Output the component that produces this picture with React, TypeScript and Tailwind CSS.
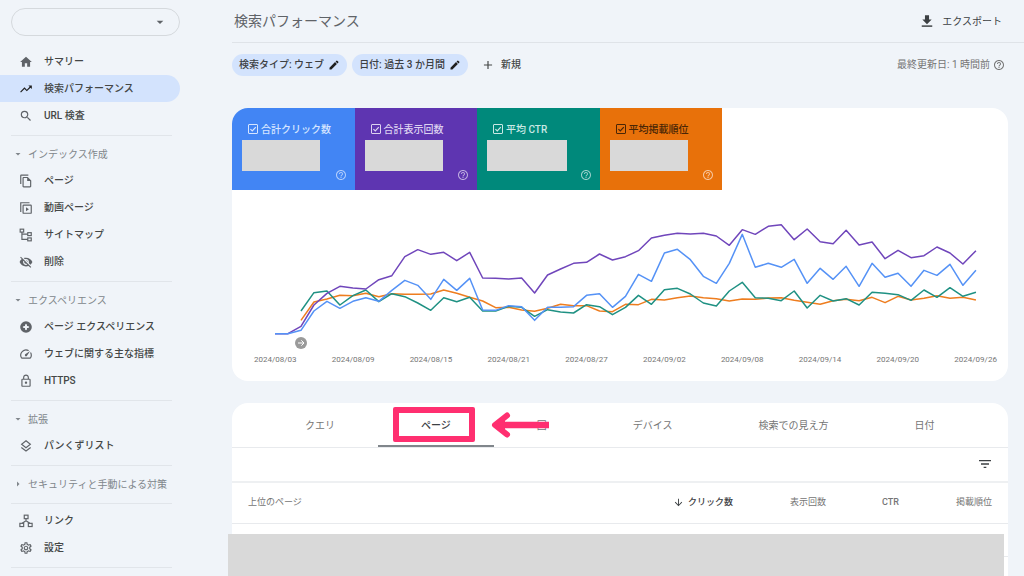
import { useState } from "react";
import type { ReactNode } from "react";
import {
  MdAdd,
  MdArrowDownward,
  MdArrowDropDown,
  MdArrowRight,
  MdEdit,
  MdFilterList,
  MdHelpOutline,
  MdHome,
  MdOutlineFileCopy,
  MdOutlineLock,
  MdOutlineSettings,
  MdOutlineSpeed,
  MdSearch,
  MdTrendingUp,
  MdVisibilityOff,
} from "react-icons/md";

const VideoPagesIcon = () => (
  <svg viewBox="0 0 24 24" className="size-[14px]" fill="none" stroke="currentColor" strokeWidth="2">
    <path d="M3 19V3h15" />
    <rect x="7" y="7" width="14" height="14" rx="1" />
    <path d="M12 10.500v7l5-3.500z" fill="currentColor" stroke="none" />
  </svg>
);

const SitemapIcon = () => (
  <svg viewBox="0 0 24 24" className="size-[14px]" fill="none" stroke="currentColor" strokeWidth="2">
    <rect x="2" y="2" width="6" height="5" />
    <rect x="15" y="8" width="6" height="5" />
    <rect x="15" y="17" width="6" height="5" />
    <path d="M5 7v12.500h10M5 10.500h10" />
  </svg>
);

const ExperienceIcon = () => (
  <svg viewBox="0 0 24 24" className="size-[14px]" fill="currentColor">
    <circle cx="12" cy="12" r="10" />
    <path d="M12 6l1.800 4.200L18 12l-4.200 1.800L12 18l-1.800-4.200L6 12l4.200-1.800z" fill="#f0f4f9" />
    <path d="M10.500 7.500h3v3h3v3h-3v3h-3v-3h-3v-3h3z" fill="#f0f4f9" />
  </svg>
);

const BreadcrumbIcon = () => (
  <svg viewBox="0 0 24 24" className="size-[14px]" fill="none" stroke="currentColor" strokeWidth="2">
    <path d="M12 3l7.500 6-7.500 6-7.500-6z" />
    <path d="M4 14.500l8 6.200 8-6.200" />
  </svg>
);

const LinksIcon = () => (
  <svg viewBox="0 0 24 24" className="size-[14px]" fill="none" stroke="currentColor" strokeWidth="2">
    <rect x="9" y="2" width="6.500" height="6" />
    <rect x="1.500" y="16" width="6.500" height="5.500" />
    <rect x="16" y="16" width="6.500" height="5.500" />
    <path d="M12 8v4M5.500 16l6.500-4.500 6.500 4.500" />
  </svg>
);

const DownloadIcon = () => (
  <svg viewBox="0 0 24 24" className="size-[14px]" fill="currentColor">
    <path d="M20 9.500h-4.500V2h-7v7.500H4l8 8z" />
    <path d="M3 19.500h18V22H3z" />
  </svg>
);

type NavItemProps = { icon: ReactNode; label: string; active?: boolean };

const NavItem = ({ icon, label, active }: NavItemProps) => (
  <a
    href="#"
    className={
      active
        ? "flex h-[27px] items-center gap-[11px] rounded-r-full bg-[#d3e3fd] pl-[19px] text-[#1f1f1f]"
        : "flex h-[27px] items-center gap-[11px] pl-[19px] text-[#5f6368]"
    }
  >
    {icon}
    <span className="text-[10px] font-medium text-[#444746]">{label}</span>
  </a>
);

const Divider = () => <hr className="mt-[6px] ml-[11px] mr-2 border-[#e1e5ea]" />;

const NavSection = ({ label, closed }: { label: string; closed?: boolean }) => (
  <button
    type="button"
    className="mt-[5px] flex h-[26px] w-full items-center gap-1 pl-3 text-[10px] text-[#80868b]"
  >
    {closed ? <MdArrowRight className="size-3" /> : <MdArrowDropDown className="size-3" />}
    {label}
  </button>
);

const Sidebar = () => (
  <aside className="w-[180px] shrink-0 overflow-hidden pt-2">
    <div className="relative ml-[11px]">
      <select
        aria-label="プロパティ"
        className="h-7 w-full appearance-none rounded-full border border-[#d5d9dd] bg-transparent px-4"
      />
      <MdArrowDropDown className="pointer-events-none absolute top-[6px] right-3 size-4 text-[#5f6368]" />
    </div>
    <nav className="mt-3">
      <NavItem icon={<MdHome className="size-[14px]" />} label="サマリー" />
      <NavItem icon={<MdTrendingUp className="size-[14px]" />} label="検索パフォーマンス" active />
      <NavItem icon={<MdSearch className="size-[14px]" />} label="URL 検査" />
      <Divider />
      <NavSection label="インデックス作成" />
      <NavItem icon={<MdOutlineFileCopy className="size-[14px]" />} label="ページ" />
      <NavItem icon={<VideoPagesIcon />} label="動画ページ" />
      <NavItem icon={<SitemapIcon />} label="サイトマップ" />
      <NavItem icon={<MdVisibilityOff className="size-[14px]" />} label="削除" />
      <Divider />
      <NavSection label="エクスペリエンス" />
      <NavItem icon={<ExperienceIcon />} label="ページ エクスペリエンス" />
      <NavItem icon={<MdOutlineSpeed className="size-[14px]" />} label="ウェブに関する主な指標" />
      <NavItem icon={<MdOutlineLock className="size-[14px]" />} label="HTTPS" />
      <Divider />
      <NavSection label="拡張" />
      <NavItem icon={<BreadcrumbIcon />} label="パンくずリスト" />
      <Divider />
      <NavSection label="セキュリティと手動による対策" closed />
      <Divider />
      <div className="pt-[3px]">
        <NavItem icon={<LinksIcon />} label="リンク" />
        <NavItem icon={<MdOutlineSettings className="size-[14px]" />} label="設定" />
      </div>
      <Divider />
    </nav>
  </aside>
);

const metrics = [
  { id: "clicks", label: "合計クリック数", card: "bg-[#4285f4] text-[#d6e5ff]", box: "w-[78px]" },
  { id: "impressions", label: "合計表示回数", card: "bg-[#5e35b1] text-[#dcd1f0]", box: "w-[78px]" },
  { id: "ctr", label: "平均 CTR", card: "bg-[#00897b] text-[#c9e8e4]", box: "w-[80px]" },
  { id: "position", label: "平均掲載順位", card: "bg-[#e8710a] text-[#4a2606]", box: "w-[78px]" },
];

const MetricCards = () => (
  <div className="grid w-[490px] grid-cols-4">
    {metrics.map((m) => (
      <div key={m.id} className={`h-[82px] pt-[13px] pr-2 pl-[10px] ${m.card}`}>
        <label htmlFor={m.id} className="flex h-4 items-center gap-[3px] pl-[6px] text-[10px] font-medium">
          <span className="relative size-[10px]">
            <input
              id={m.id}
              type="checkbox"
              defaultChecked
              className="peer block size-[10px] appearance-none rounded-[1px] border border-current"
            />
            <svg
              viewBox="0 0 10 10"
              className="pointer-events-none invisible absolute inset-0 peer-checked:visible"
              fill="none"
              stroke="currentColor"
              strokeWidth="1.200"
            >
              <path d="M2.400 5.100l1.900 1.900 3.500-3.800" />
            </svg>
          </span>
          {m.label}
        </label>
        <div className="mt-[3px] flex h-[41px] justify-between">
          <div className={`h-[31px] bg-[#d9d9d9] ${m.box}`} />
          <button type="button" aria-label="ヘルプ" className="self-end text-white/60">
            <MdHelpOutline className="size-3" />
          </button>
        </div>
      </div>
    ))}
  </div>
);

// distance from the top of the plot, one value per day
const impressions = [
  371, 371, 349, 285, 250, 229, 234, 237, 209, 197, 140, 119, 133, 127, 152, 127, 204, 205, 207, 204, 249, 195, 177,
  160, 157, 132, 150, 140, 122, 84, 76, 70, 72, 70, 78, 106, 59, 73, 49, 44, 89, 57, 95, 101, 61, 105, 96, 146, 121,
  143, 137, 111, 129, 162, 122,
];
const clicks = [
  371, 371, 361, 303, 274, 295, 274, 263, 274, 241, 211, 226, 268, 208, 241, 205, 300, 301, 287, 290, 331, 292, 292,
  290, 256, 251, 292, 259, 193, 214, 129, 118, 149, 199, 220, 160, 73, 172, 160, 172, 148, 220, 175, 208, 169, 229,
  160, 202, 190, 229, 181, 196, 163, 226, 181,
];
const ctr = [
  303, 248, 243, 285, 257, 240, 275, 251, 260, 279, 301, 263, 275, 262, 303, 303, 289, 292, 319, 299, 306, 309, 284,
  290, 314, 292, 256, 283, 239, 235, 252, 279, 288, 243, 217, 263, 265, 272, 243, 294, 256, 273, 266, 285, 247, 250,
  254, 271, 240, 262, 233, 259, 247,
];
const position = [
  331, 276, 267, 256, 257, 250, 260, 251, 253, 253, 252, 240, 250, 262, 273, 293, 292, 300, 304, 295, 283, 287, 287,
  303, 305, 283, 284, 268, 270, 263, 258, 263, 266, 273, 267, 268, 264, 263, 271, 277, 283, 272, 268, 272, 262, 278,
  259, 270, 265, 257, 265, 262, 270,
];

const toPoints = (values: number[], start = 0) =>
  values.map((v, i) => `${(129 + (i + start) * 38.94).toFixed(1)},${v}`).join(" ");

const dates = [
  "2024/08/03",
  "2024/08/09",
  "2024/08/15",
  "2024/08/21",
  "2024/08/27",
  "2024/09/02",
  "2024/09/08",
  "2024/09/14",
  "2024/09/20",
  "2024/09/26",
];

const Chart = () => (
  <div className="pt-5 pb-[13px]">
    <svg viewBox="0 0 2328 426" className="block w-full" fill="none" strokeWidth="4.500" strokeLinejoin="round">
      <polyline points={toPoints(position, 2)} stroke="#ee7d1f" />
      <polyline points={toPoints(ctr, 2)} stroke="#1f9183" />
      <polyline points={toPoints(impressions)} stroke="#7046bb" />
      <polyline points={toPoints(clicks)} stroke="#5592f6" />
      <circle cx="207" cy="399" r="18" fill="#9a9a9a" />
      <path d="M198 399h17M208 391l8 8-8 8" stroke="#fff" strokeWidth="3" />
    </svg>
    <div className="flex h-4 items-center justify-between pr-[11px] pl-[22px] text-[8px] text-[#757575]">
      {dates.map((d) => (
        <span key={d}>{d}</span>
      ))}
    </div>
  </div>
);

const tabs = ["クエリ", "ページ", "国", "デバイス", "検索での見え方", "日付"];

const PagesTable = () => {
  const [tab, setTab] = useState("ページ");

  return (
    <section className="mt-[22px] h-[200px] rounded-t-2xl bg-white">
      <div className="relative flex h-[45px] border-b border-[#e8eaed] pl-[30px]">
        {tabs.map((t) => (
          <button
            key={t}
            type="button"
            onClick={() => setTab(t)}
            className={
              t === tab
                ? "relative border-b-2 border-[#80868b] px-[43px] pt-[2px] text-[10px] font-medium text-[#3c4043]"
                : "px-[43px] text-[10px] text-[#757575]"
            }
          >
            {t}
            {t === "ページ" && (
              <span className="absolute top-1 left-[15px] h-[35px] w-[82px] rounded-xs border-6 border-[#ff2f70]" />
            )}
          </button>
        ))}
        <svg
          viewBox="0 0 58 28"
          className="pointer-events-none absolute top-2 left-[259px] h-7 w-[58px]"
          fill="none"
          stroke="#ff2f70"
          strokeWidth="6"
        >
          <path d="M5 14h53" strokeWidth="6.500" />
          <path d="M16 4.500L4 14l12 9.500" strokeLinecap="round" strokeLinejoin="round" />
          <path d="M4 14l10-5v10z" fill="#ff2f70" stroke="none" />
        </svg>
      </div>
      <div className="flex h-[35px] items-center justify-end border-b-2 border-[#eef0f2] pr-[15px] pb-[2px]">
        <button type="button" aria-label="フィルタ" className="text-[#3c4043]">
          <MdFilterList className="size-4" />
        </button>
      </div>
      <table className="w-full table-fixed text-right text-[9px] text-[#757575]">
        <thead>
          <tr className="h-[40px] border-b border-[#e8eaed]">
            <th className="pl-4 text-left font-normal">上位のページ</th>
            <th className="w-[120px] font-medium text-[#3c4043]">
              <span className="flex items-center justify-end gap-1">
                <MdArrowDownward className="size-[11px]" />
                クリック数
              </span>
            </th>
            <th className="w-[93px] font-normal">表示回数</th>
            <th className="w-[73px] font-medium">CTR</th>
            <th className="w-[109px] pr-4 font-normal">掲載順位</th>
          </tr>
        </thead>
        <tbody>
          <tr className="h-[33px] border-b border-[#e8eaed]">
            <td colSpan={5} className="relative">
              <div className="absolute top-[10px] right-1 -left-1 h-20 bg-[#d9d9d9]" />
            </td>
          </tr>
        </tbody>
      </table>
    </section>
  );
};

const Chip = ({ label }: { label: string }) => (
  <button
    type="button"
    className="flex h-[22px] items-center gap-1 rounded-full bg-[#d3e3fd] px-[7px] font-medium text-[#3c4043]"
  >
    {label}
    <MdEdit className="size-3 text-[#1f1f1f]" />
  </button>
);

const App = () => {
  return (
    <div className="flex h-screen overflow-hidden bg-[#f0f4f9] font-['Roboto','Noto_Sans_CJK_JP',sans-serif]">
      <Sidebar />
      <main className="ml-[52px] min-w-0 flex-1">
        <header className="flex h-[43px] items-center justify-between border-b border-[#dfe3e8] pr-[22px] pl-[2px]">
          <h1 className="text-[14px] text-[#5f6368]">検索パフォーマンス</h1>
          <button type="button" className="flex items-center gap-2 text-[10px] text-[#3c4043]">
            <DownloadIcon />
            エクスポート
          </button>
        </header>
        <div className="pr-4">
          <div className="flex h-[43px] items-center gap-[5px] pr-[3px] text-[10px] text-[#444746]">
            <Chip label="検索タイプ: ウェブ" />
            <Chip label="日付: 過去 3 か月間" />
            <button type="button" className="ml-2 flex items-center gap-[6px] font-medium">
              <MdAdd className="size-[14px]" />
              新規
            </button>
            <span className="ml-auto flex items-center gap-[3px] text-[#757575]">
              最終更新日: 1 時間前
              <MdHelpOutline className="size-3" />
            </span>
          </div>
          <section className="mt-[22px] overflow-hidden rounded-2xl bg-white">
            <MetricCards />
            <Chart />
          </section>
          <PagesTable />
        </div>
      </main>
    </div>
  );
};

export default App;
